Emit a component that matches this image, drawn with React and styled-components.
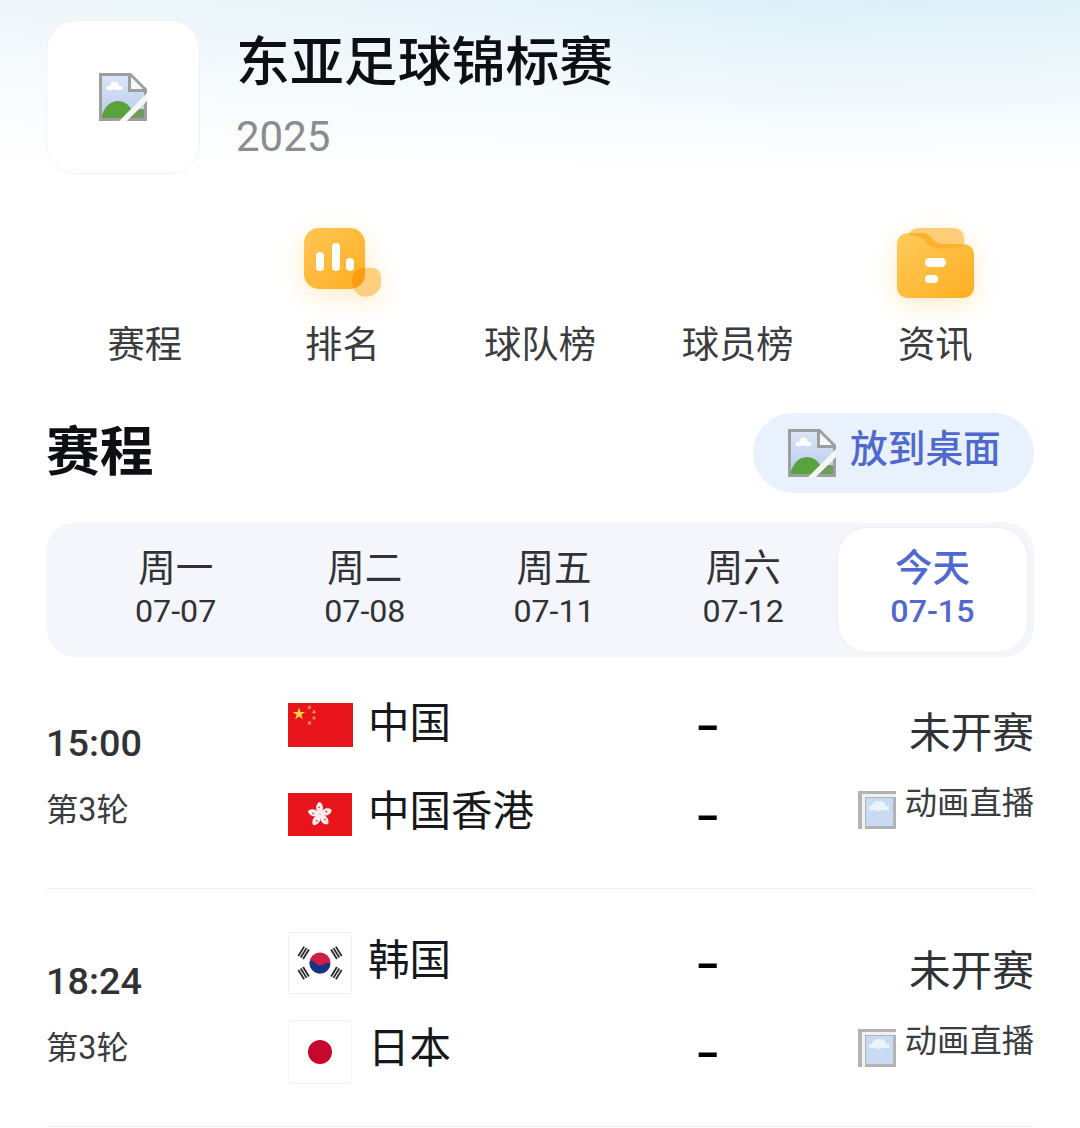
import styled, { createGlobalStyle } from 'styled-components'

const Global = createGlobalStyle`
html, body { margin:0; padding:0; background:#fff; }
body { font-family: Roboto, "Noto Sans CJK SC", sans-serif; }
`

const Page = styled.div`
width:1080px;
height:1128px;
overflow:hidden;
box-sizing:border-box;
padding:20px 46px 0;
background:
  linear-gradient(180deg, rgba(255,255,255,0) 0, rgba(255,255,255,0.5) 80px, #ffffff 170px) no-repeat,
  linear-gradient(90deg, #eff7fb 0, #e6f3fa 45%, #dcf0f9 75%, #dff1f9 100%) no-repeat;
background-size:100% 175px, 100% 175px;
`

const Header = styled.header`
display:flex;
gap:36px;
`

const Logo = styled.div`
width:154px;
height:154px;
box-sizing:border-box;
display:flex;
align-items:center;
justify-content:center;
background:#fff;
border:1px solid #f0f2f4;
border-radius:30px;
`

const HeadText = styled.div`
display:flex;
flex-direction:column;
`

const Title = styled.h1`
margin:12px 0 0;
font-size:53.9px;
line-height:62px;
font-weight:500;
color:#0d0f14;
`

const Year = styled.div`
margin-top:18px;
font-size:42px;
line-height:50px;
color:#8a8c90;
`

const Nav = styled.nav`
display:grid;
grid-template-columns:repeat(5, 1fr);
margin-top:50px;
`

const NavItem = styled.div`
display:flex;
flex-direction:column;
align-items:center;
`

const NavIcon = styled.div`
height:80px;
display:flex;
justify-content:center;
filter:drop-shadow(0 6px 12px rgba(255,190,70,0.3));
`

const NavLabel = styled.div`
margin-top:16px;
font-size:37.3px;
line-height:50px;
color:#3a3c40;
`

const SectionHead = styled.div`
display:flex;
justify-content:space-between;
align-items:center;
margin-top:43px;
height:80px;
`

const SectionTitle = styled.h2`
margin:0;
font-size:53.8px;
line-height:70px;
font-weight:700;
color:#0d0f14;
`

const DeskButton = styled.div`
width:281px;
height:80px;
box-sizing:border-box;
padding-left:35px;
display:flex;
align-items:center;
gap:14px;
border-radius:40px;
background:#e8f1fc;
font-size:37.7px;
line-height:48px;
font-weight:500;
color:#4f69cf;
`

const DeskLabel = styled.span`
margin-top:-9px;
`

const Tabs = styled.div`
display:grid;
grid-template-columns:repeat(5, 189.2px);
justify-content:end;
margin-top:29px;
height:135px;
box-sizing:border-box;
padding:6px 7px 5px 0;
border-radius:30px;
background:#f4f6fb;
`

const Tab = styled.div`
display:flex;
flex-direction:column;
align-items:center;
justify-content:center;
border-radius:30px;
color:${p => (p.$active ? '#4f69cf' : '#303236')};
background:${p => (p.$active ? '#fff' : 'transparent')};
font-weight:${p => (p.$active ? 500 : 400)};
box-shadow:${p => (p.$active ? '0 0 4px rgba(0,0,0,0.05)' : 'none')};
`

const TabDay = styled.div`
font-size:37.5px;
line-height:44px;
margin-top:-3px;
`

const TabDate = styled.div`
font-size:32.2px;
line-height:40px;
margin-top:1px;
`

const Match = styled.div`
display:grid;
grid-template-columns:242px 1fr auto;
padding:41px 0 44px;
border-bottom:1px solid #eeeff1;

&:first-child {
  padding-top:35px;
}

&:last-child {
  padding-bottom:45px;
}
`

const TimeCol = styled.div`
display:flex;
flex-direction:column;
padding-top:27px;
`

const Time = styled.div`
font-size:37.8px;
line-height:48px;
font-weight:500;
color:#303236;
`

const Round = styled.div`
margin-top:19px;
font-size:32.3px;
line-height:48px;
color:#3a3c40;
`

const TeamName = styled.div`
font-size:41.5px;
line-height:52px;
color:#16181c;
margin:1px 0 0 -1px;
`

const TeamLine = styled.div`
display:grid;
grid-template-columns:81px 329px 1fr;
align-items:center;
height:62px;

& + & ${TeamName} {
  margin-top:-2px;
}
`

const Teams = styled.div`
display:flex;
flex-direction:column;
gap:27.5px;
`

const FlagBox = styled.div`
display:flex;
align-items:center;
height:62px;
padding-top:4px;
box-sizing:border-box;
`

const Score = styled.div`
font-size:41px;
line-height:52px;
font-weight:700;
color:#000;
margin:6px 0 0 -3px;
transform:scaleX(1.6);
transform-origin:left center;
`

const StatusCol = styled.div`
display:flex;
flex-direction:column;
align-items:flex-end;
`

const Status = styled.div`
margin-top:16px;
font-size:41.7px;
line-height:52px;
color:#303236;
`

const Live = styled.div`
display:flex;
align-items:flex-start;
gap:9px;
margin-top:21px;
font-size:32.3px;
line-height:44px;
color:#3a3c40;
`

const LiveIcon = styled.div`
margin-top:10px;
display:flex;
`

function BrokenImage({ id }) {
  return (
    <svg width="48" height="48" viewBox="0 0 48 48">
      <defs>
        <clipPath id={id}>
          <path d="M3 3H29V19H45V45H3Z" />
        </clipPath>
        <linearGradient id={`${id}s`} x1="0" y1="0" x2="0" y2="1">
          <stop offset="0" stopColor="#dbe5f7" />
          <stop offset="1" stopColor="#b7caee" />
        </linearGradient>
      </defs>
      <path d="M0 0H32L48 16V48H0Z" fill="#9d9e9e" />
      <path d="M3 3H29V19H45V45H3Z" fill={`url(#${id}s)`} />
      <path d="M32 4L44 16H32Z" fill="#f6f7f9" />
      <g clipPath={`url(#${id})`}>
        <ellipse cx="11" cy="15" rx="3.5" ry="2.2" fill="#fff" />
        <ellipse cx="15.5" cy="12.5" rx="4" ry="4" fill="#fff" />
        <ellipse cx="20" cy="15" rx="3.5" ry="2.2" fill="#fff" />
        <ellipse cx="19" cy="49" rx="17" ry="21" fill="#5aa33c" />
        <ellipse cx="42" cy="50" rx="10" ry="14" fill="#6f9c5c" />
      </g>
      <path d="M50 22L22 50" stroke="#f4f8f4" strokeWidth="5.5" />
    </svg>
  )
}

function FrameIcon() {
  return (
    <svg width="38" height="38" viewBox="0 0 38 38">
      <rect width="38" height="38" fill="#b2b3b4" />
      <path d="M4 3H38V6H7V38H4Z" fill="#f1f1f1" />
      <rect x="8" y="7" width="27" height="28" fill="#c9daf4" />
      <ellipse cx="21" cy="15" rx="7" ry="5" fill="#edf3fb" />
      <rect x="11" y="15" width="20" height="4" fill="#edf3fb" />
    </svg>
  )
}

function ChartIcon() {
  return (
    <svg width="90" height="80" viewBox="0 0 90 80">
      <defs>
        <linearGradient id="cg" x1="0" y1="0" x2="1" y2="1">
          <stop offset="0" stopColor="#ffc655" />
          <stop offset="1" stopColor="#ffae22" />
        </linearGradient>
        <clipPath id="cq">
          <rect x="7" y="4" width="61" height="61" rx="15" />
        </clipPath>
      </defs>
      <rect x="7" y="4" width="61" height="61" rx="15" fill="url(#cg)" />
      <path d="M65 44H76Q84 45 84 54V59Q84 67 76 71Q70 74 64 72Q56 68 55 60V54Q56 46 65 44Z" fill="#ffcf80" />
      <path d="M65 44H76Q84 45 84 54V59Q84 67 76 71Q70 74 64 72Q56 68 55 60V54Q56 46 65 44Z" fill="#ff9d10" clipPath="url(#cq)" />
      <rect x="19" y="28" width="8" height="19" rx="4" fill="#fff" />
      <rect x="35" y="19" width="8" height="28" rx="4" fill="#fff" />
      <rect x="49" y="34" width="8" height="13" rx="4" fill="#fff" />
    </svg>
  )
}

function FolderIcon() {
  return (
    <svg width="90" height="80" viewBox="0 0 90 80">
      <defs>
        <linearGradient id="fg" x1="0" y1="0" x2="1" y2="1">
          <stop offset="0" stopColor="#ffcb5c" />
          <stop offset="1" stopColor="#ffae20" />
        </linearGradient>
      </defs>
      <rect x="18" y="4" width="56" height="26" rx="10" fill="#ffcd78" />
      <path d="M20 9H30Q38 9 42 14Q46 20 54 20H72Q84 20 84 32V62Q84 74 72 74H19Q7 74 7 62V21Q7 9 20 9Z" fill="url(#fg)" />
      <path d="M18 9.5Q20 9 30 9Q38 9 42 14Q46 20 54 20H73Q72 24 66 24H50Q40 24 36 18Q32 12 24 12Z" fill="#ffb02e" />
      <rect x="35" y="34" width="21" height="9" rx="4.5" fill="#fff" />
      <rect x="35" y="51" width="13" height="8" rx="4" fill="#fff" />
    </svg>
  )
}

function Star({ cx, cy, r, rot = 0, fill = '#ffd33d' }) {
  const pts = []
  for (let i = 0; i < 10; i++) {
    const rad = i % 2 === 0 ? r : r * 0.38
    const a = ((i * 36 - 90 + rot) * Math.PI) / 180
    pts.push(`${(cx + rad * Math.cos(a)).toFixed(2)},${(cy + rad * Math.sin(a)).toFixed(2)}`)
  }
  return <polygon points={pts.join(' ')} fill={fill} />
}

function FlagCN() {
  return (
    <svg width="65" height="44" viewBox="0 0 65 44">
      <rect width="65" height="44" fill="#e8141c" />
      <Star cx={11} cy={11} r={6.5} />
      <Star cx={21.5} cy={4.5} r={2.6} rot={20} fill="#f6a35a" />
      <Star cx={26} cy={9} r={2.6} rot={40} fill="#f6a35a" />
      <Star cx={26} cy={15} r={2.6} fill="#f6a35a" />
      <Star cx={21.5} cy={20} r={2.6} rot={20} fill="#f6a35a" />
    </svg>
  )
}

function FlagHK() {
  return (
    <svg width="64" height="43" viewBox="0 0 64 43">
      <rect width="64" height="43" fill="#e8141c" />
      {[0, 72, 144, 216, 288].map(r => (
        <g key={r} transform={`rotate(${r} 32 21.5)`}>
          <path d="M32 21.5C27 18 27 12 31 9C35 10 37 16 32 21.5Z" fill="#fbeef0" />
          <circle cx="31" cy="14.5" r="0.8" fill="#e8141c" />
        </g>
      ))}
    </svg>
  )
}

function FlagKR() {
  return (
    <svg width="64" height="62" viewBox="0 0 64 62">
      <rect x="0.5" y="0.5" width="63" height="61" fill="#fff" stroke="#f1f1f2" />
      <circle cx="32" cy="31" r="10.5" fill="#cd1f45" />
      <path d="M21.6 29.5A10.5 10.5 0 0 0 42.4 32.5C38 28 35 35 31 33.5C27 32 26 27 21.6 29.5Z" fill="#14348a" />
      {[-58, 58, 122, 238].map(r => (
        <g key={r} transform={`rotate(${r} 32 31)`} fill="#26272a">
          <rect x="26.5" y="8" width="11" height="1.8" />
          <rect x="26.5" y="10.8" width="11" height="1.8" />
          <rect x="26.5" y="13.6" width="11" height="1.8" />
        </g>
      ))}
    </svg>
  )
}

function FlagJP() {
  return (
    <svg width="64" height="64" viewBox="0 0 64 64">
      <rect x="0.5" y="0.5" width="63" height="63" fill="#fff" stroke="#f3f3f4" />
      <circle cx="32" cy="32" r="12" fill="#c8072e" />
    </svg>
  )
}

const tabs = [
  { day: '周一', date: '07-07' },
  { day: '周二', date: '07-08' },
  { day: '周五', date: '07-11' },
  { day: '周六', date: '07-12' },
  { day: '今天', date: '07-15', active: true },
]

const matches = [
  { time: '15:00', home: '中国', away: '中国香港', homeFlag: <FlagCN />, awayFlag: <FlagHK /> },
  { time: '18:24', home: '韩国', away: '日本', homeFlag: <FlagKR />, awayFlag: <FlagJP /> },
]

export default function App() {
  return (
    <Page>
      <Global />
      <Header>
        <Logo><BrokenImage id="b1" /></Logo>
        <HeadText>
          <Title>东亚足球锦标赛</Title>
          <Year>2025</Year>
        </HeadText>
      </Header>

      <Nav>
        <NavItem><NavIcon /><NavLabel>赛程</NavLabel></NavItem>
        <NavItem><NavIcon><ChartIcon /></NavIcon><NavLabel>排名</NavLabel></NavItem>
        <NavItem><NavIcon /><NavLabel>球队榜</NavLabel></NavItem>
        <NavItem><NavIcon /><NavLabel>球员榜</NavLabel></NavItem>
        <NavItem><NavIcon><FolderIcon /></NavIcon><NavLabel>资讯</NavLabel></NavItem>
      </Nav>

      <SectionHead>
        <SectionTitle>赛程</SectionTitle>
        <DeskButton><BrokenImage id="b2" /><DeskLabel>放到桌面</DeskLabel></DeskButton>
      </SectionHead>

      <Tabs>
        {tabs.map(t => (
          <Tab key={t.date} $active={t.active}>
            <TabDay>{t.day}</TabDay>
            <TabDate>{t.date}</TabDate>
          </Tab>
        ))}
      </Tabs>

      <div>
        {matches.map(m => (
          <Match key={m.time}>
            <TimeCol>
              <Time>{m.time}</Time>
              <Round>第3轮</Round>
            </TimeCol>
            <Teams>
              <TeamLine>
                <FlagBox>{m.homeFlag}</FlagBox>
                <TeamName>{m.home}</TeamName>
                <Score>-</Score>
              </TeamLine>
              <TeamLine>
                <FlagBox>{m.awayFlag}</FlagBox>
                <TeamName>{m.away}</TeamName>
                <Score>-</Score>
              </TeamLine>
            </Teams>
            <StatusCol>
              <Status>未开赛</Status>
              <Live>
                <LiveIcon><FrameIcon /></LiveIcon>
                动画直播
              </Live>
            </StatusCol>
          </Match>
        ))}
      </div>
    </Page>
  )
}
